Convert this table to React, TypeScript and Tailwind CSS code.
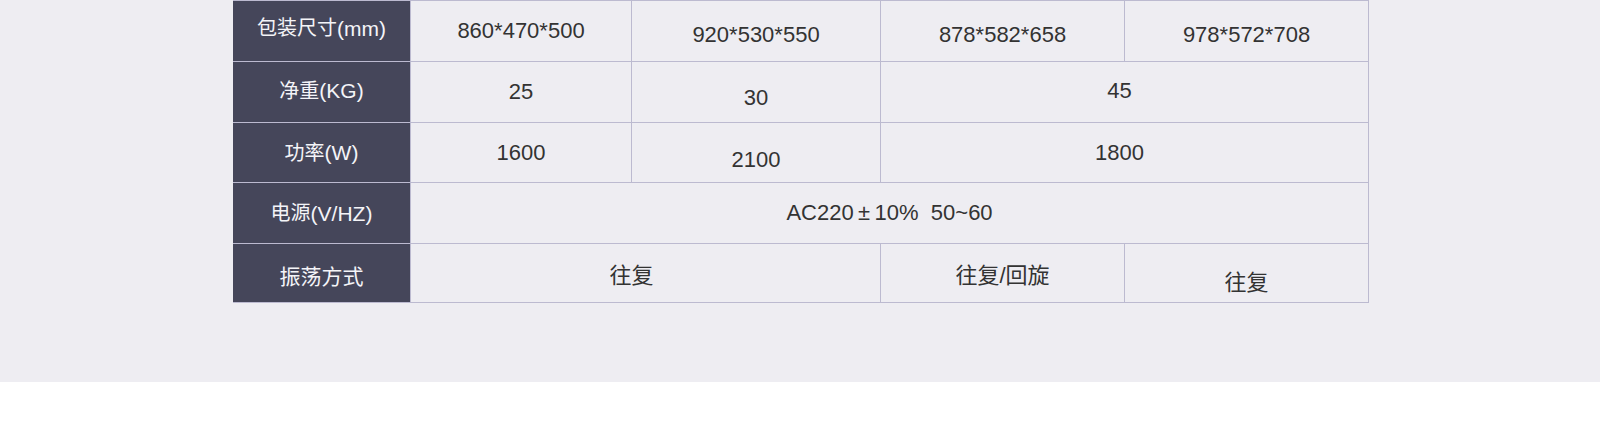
import React from 'react';

const font = { fontFamily: '"Liberation Sans", "Noto Sans CJK SC", sans-serif' };

const Label = ({ children, className = '' }: { children: React.ReactNode; className?: string }) => (
    <div className={`flex items-center justify-center bg-[#45465a] text-[21px] text-[#f4f4f8] ${className}`}>
        {children}
    </div>
);

const Cell = ({ children, className = '' }: { children: React.ReactNode; className?: string }) => (
    <div className={`flex items-center justify-center bg-[#eeedf2] text-[22px] text-[#333333] ${className}`}>
        {children}
    </div>
);

// CJK glyphs sit a little smaller than the latin text
const Cjk = ({ children }: { children: React.ReactNode }) => <span className="text-[20px]">{children}</span>;

export default function App() {
    return (
        <div className="w-full" style={font}>
            <div className="h-[382px] w-full bg-[#eeedf2]">
                {/* spec table */}
                <div className="ml-[233px] grid w-[1136px] grid-cols-[177px_220px_248px_243px_243px] grid-rows-[60px_60px_59px_60px_58px] gap-px bg-[#bcbad0] py-px pr-px leading-none">
                    <Label className="pb-[6px]"><Cjk>包装尺寸</Cjk>(mm)</Label>
                    <Cell>860*470*500</Cell>
                    <Cell className="pt-[8px]">920*530*550</Cell>
                    <Cell className="pt-[8px]">878*582*658</Cell>
                    <Cell className="pt-[8px]">978*572*708</Cell>

                    <Label className="pb-[3px]"><Cjk>净重</Cjk>(KG)</Label>
                    <Cell>25</Cell>
                    <Cell className="pt-[11px]">30</Cell>
                    <Cell className="col-span-2 pr-[10px] pb-[3px]">45</Cell>

                    <Label><Cjk>功率</Cjk>(W)</Label>
                    <Cell>1600</Cell>
                    <Cell className="pt-[14px]">2100</Cell>
                    <Cell className="col-span-2 pr-[10px]">1800</Cell>

                    <Label><Cjk>电源</Cjk>(V/HZ)</Label>
                    <Cell className="col-span-4 whitespace-pre">AC220{'\u2009±\u2009'}10%  50~60</Cell>

                    <Label className="pt-[6px] text-[20px]">振荡方式</Label>
                    <Cell className="col-span-2 pt-[6px] pr-[28px] text-[18px]">往复</Cell>
                    <Cell className="pt-[6px] text-[18px]">往复/回旋</Cell>
                    <Cell className="pt-[20px] text-[18px]">往复</Cell>
                </div>
            </div>
        </div>
    );
}
